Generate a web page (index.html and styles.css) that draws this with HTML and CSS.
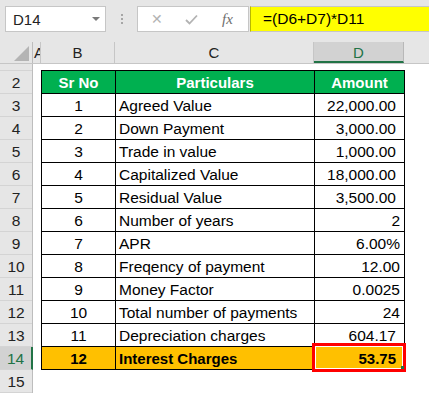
FILE: index.html
```html
<!DOCTYPE html>
<html>
<head>
<meta charset="utf-8">
<link rel="stylesheet" href="styles.css">
</head>
<body>
<div class="app">
  <div class="topbar">
    <div class="namebox"><span>D14</span><span class="caret"></span></div>
    <div class="dots"><i></i><i></i><i></i></div>
    <div class="fxgroup">
      <span class="btn x">&#x2715;</span>
      <span class="btn check"><svg width="13" height="11" viewBox="0 0 13 11"><path d="M1 6 L4.5 9.5 L12 1.5" fill="none" stroke="#b3b3b3" stroke-width="1.8"/></svg></span>
      <span class="btn fx">fx</span>
    </div>
    <div class="formula">=(D6+D7)*D11</div>
  </div>
  <div class="colheads">
    <div class="corner"><span class="tri"></span></div>
    <div class="ch cha">A</div>
    <div class="ch chb">B</div>
    <div class="ch chc">C</div>
    <div class="ch chd sel">D</div>
    <div class="ch che"></div>
  </div>
  <div class="body">
    <div class="rowheads">
      <div class="rh r1"></div>
      <div class="rh">2</div>
      <div class="rh">3</div>
      <div class="rh">4</div>
      <div class="rh">5</div>
      <div class="rh">6</div>
      <div class="rh">7</div>
      <div class="rh">8</div>
      <div class="rh">9</div>
      <div class="rh">10</div>
      <div class="rh">11</div>
      <div class="rh">12</div>
      <div class="rh">13</div>
      <div class="rh sel">14</div>
      <div class="rh">15</div>
    </div>
    <div class="cells">
      <div class="tbl">
        <div class="c hd ctr">Sr No</div><div class="c hd ctr">Particulars</div><div class="c hd ctr">Amount</div>
        <div class="c ctr">1</div><div class="c">Agreed Value</div><div class="c num sp">22,000.00</div>
        <div class="c ctr">2</div><div class="c">Down Payment</div><div class="c num sp">3,000.00</div>
        <div class="c ctr">3</div><div class="c">Trade in value</div><div class="c num sp">1,000.00</div>
        <div class="c ctr">4</div><div class="c">Capitalized Value</div><div class="c num sp">18,000.00</div>
        <div class="c ctr">5</div><div class="c">Residual Value</div><div class="c num sp">3,500.00</div>
        <div class="c ctr">6</div><div class="c">Number of years</div><div class="c num">2</div>
        <div class="c ctr">7</div><div class="c">APR</div><div class="c num">6.00%</div>
        <div class="c ctr">8</div><div class="c">Freqency of payment</div><div class="c num">12.00</div>
        <div class="c ctr">9</div><div class="c">Money Factor</div><div class="c num">0.0025</div>
        <div class="c ctr">10</div><div class="c">Total number of payments</div><div class="c num">24</div>
        <div class="c ctr">11</div><div class="c">Depreciation charges</div><div class="c num sp">604.17</div>
        <div class="c ctr hl">12</div><div class="c hl">Interest Charges</div><div class="c num sp hl active">53.75</div>
      </div>
    </div>
  </div>
</div>
</body>
</html>
```
FILE: styles.css
```css
html, body {
  margin: 0;
  padding: 0;
  background: #ffffff;
}
.app {
  width: 429px;
  height: 393px;
  overflow: hidden;
  font-family: "Liberation Sans", Arial, sans-serif;
  font-size: 15px;
  color: #000;
}
.topbar {
  height: 42px;
  box-sizing: border-box;
  background: #e6e6e6;
  padding: 6px 0 0 5px;
  display: flex;
  align-items: flex-start;
}
.namebox {
  width: 101px;
  height: 26px;
  box-sizing: border-box;
  background: #fff;
  border: 1px solid #c6c6c6;
  display: flex;
  align-items: center;
  justify-content: space-between;
  padding: 0 5px 0 7px;
  color: #222;
}
.caret {
  width: 0;
  height: 0;
  border-left: 4px solid transparent;
  border-right: 4px solid transparent;
  border-top: 4px solid #7a7a7a;
}
.dots {
  width: 31px;
  height: 26px;
  display: flex;
  flex-direction: column;
  align-items: center;
  justify-content: center;
  gap: 2px;
}
.dots i {
  width: 2px;
  height: 2px;
  background: #a6a6a6;
}
.fxgroup {
  width: 112px;
  height: 26px;
  box-sizing: border-box;
  background: #fff;
  border: 1px solid #c6c6c6;
  display: flex;
  align-items: center;
  padding-left: 12px;
}
.btn {
  color: #b3b3b3;
  display: flex;
  align-items: center;
  justify-content: center;
}
.x {
  width: 14px;
  font-size: 14px;
  margin-right: 20px;
}
.check {
  width: 14px;
  margin-right: 24px;
}
.fx {
  font-family: "Liberation Serif", serif;
  font-style: italic;
  color: #6e6e6e;
  font-size: 15px;
}
.formula {
  flex: 1;
  height: 26px;
  box-sizing: border-box;
  background: #ffff00;
  border: 1px solid #c6c6c6;
  border-left: 1px solid #b8b800;
  border-right: none;
  padding-left: 12px;
  display: flex;
  align-items: center;
  margin-left: 1px;
  font-size: 15.5px;
}
.colheads {
  height: 21px;
  display: flex;
  background: #e6e6e6;
  border-bottom: 1px solid #c6c6c6;
  box-sizing: content-box;
}
.corner {
  width: 33px;
  flex: none;
  position: relative;
  border-right: 1px solid #bdbdbd;
  box-sizing: border-box;
}
.tri {
  position: absolute;
  right: 3px;
  bottom: 2px;
  width: 0;
  height: 0;
  border-left: 15px solid transparent;
  border-bottom: 15px solid #b4b4b4;
}
.ch {
  flex: none;
  box-sizing: border-box;
  border-right: 1px solid #c6c6c6;
  display: flex;
  align-items: center;
  justify-content: center;
  color: #222;
  overflow: hidden;
}
.cha { width: 8px; justify-content: flex-start; padding-left: 1px; }
.chb { width: 74px; }
.chc { width: 199px; }
.chd { width: 90px; }
.che { flex: 1; border-right: none; }
.ch.sel {
  background: #d2d2d2;
  color: #217346;
  border-bottom: 2px solid #217346;
  padding-top: 2px;
  border-right: 1px solid #b8b8b8;
}
.body {
  display: flex;
}
.rowheads {
  width: 33px;
  flex: none;
  background: #e6e6e6;
  border-right: 1px solid #bdbdbd;
  box-sizing: border-box;
}
.rh {
  height: 23px;
  box-sizing: border-box;
  border-bottom: 1px solid #d4d4d4;
  display: flex;
  align-items: center;
  justify-content: center;
  color: #222;
  padding-top: 1px;
  font-size: 15.5px;
}
.rh.r1 { height: 7px; }
.rh.sel {
  background: #d2d2d2;
  color: #217346;
  border-right: 2px solid #217346;
  margin-right: -1px;
}
.cells {
  flex: 1;
  padding: 6px 0 0 8px;
  background: #fff;
}
.tbl {
  display: grid;
  grid-template-columns: 74px 199px 90px;
  width: 364px;
  box-sizing: border-box;
  border-top: 1px solid #000;
  border-left: 1px solid #000;
}
.c {
  height: 23px;
  box-sizing: border-box;
  border-right: 1px solid #000;
  border-bottom: 1px solid #000;
  display: flex;
  align-items: flex-end;
  padding: 0 4px 1px 3px;
  white-space: nowrap;
  overflow: hidden;
  font-size: 15.5px;
  line-height: 18px;
}
.ctr { justify-content: center; padding-left: 0; padding-right: 0; }
.num { justify-content: flex-end; }
.num.sp { padding-right: 8px; }
.hd {
  background: #00b050;
  color: #fff;
  font-weight: bold;
  font-size: 15px;
}
.hl {
  background: #ffc000;
  font-weight: bold;
  font-size: 15px;
}
.active {
  position: relative;
  overflow: visible;
}
.active::after {
  content: "";
  position: absolute;
  left: -3px;
  top: -4px;
  right: -2px;
  bottom: -3px;
  border: 3px solid #ff0000;
  box-shadow: inset 0 0 0 1px #ffffff;
}
.active::before {
  content: "";
  position: absolute;
  right: 0px;
  bottom: 0px;
  width: 3px;
  height: 3px;
  background: #217346;
  z-index: 2;
}
```
